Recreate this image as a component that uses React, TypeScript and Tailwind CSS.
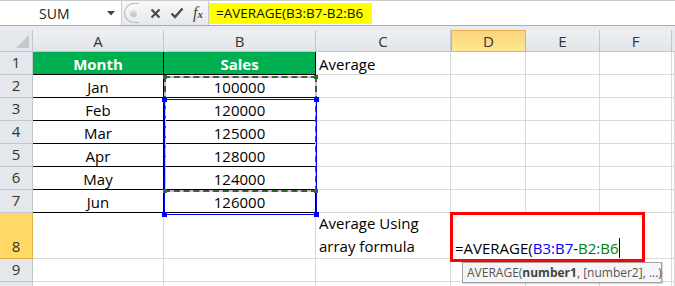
import React from "react";

const F = { fontFamily: '"Open Sans", "Noto Sans", sans-serif' };

type Cell = { text?: React.ReactNode; cls: string };

const GRID = "border-r border-b border-[#d9d9d9] bg-white";
const TBL = "border-r border-b border-black bg-white flex items-center justify-center pt-[2px]";
const GREEN = "border-r border-b border-black bg-[#00b050] flex items-center justify-center pt-[2px] text-white font-bold";
const RH = "border-r border-b border-[#c3c7cd] bg-[#e4e7eb] flex items-end justify-center pb-[1px] text-[#333]";
const RHSEL = "border-r border-b border-[#e4b04a] bg-[#ffd865] flex items-end justify-center pb-[1px] text-[#333]";

export default function App() {
  const colLetters = ["A", "B", "C", "D", "E", "F"];
  const data: [string, string][] = [
    ["Jan", "100000"],
    ["Feb", "120000"],
    ["Mar", "125000"],
    ["Apr", "128000"],
    ["May", "124000"],
    ["Jun", "126000"],
  ];

  const rows: Cell[][] = [];
  const hdr: Cell[] = [
    {
      cls: "border-r border-b border-[#c3c7cd] bg-[#e4e7eb] flex items-end justify-end p-[3px]",
      text: (
        <svg width="13" height="13" viewBox="0 0 13 13">
          <polygon points="13,0 13,13 0,13" fill="#c4c8cd" />
        </svg>
      ),
    },
  ];
  colLetters.forEach((l) => {
    hdr.push({
      text: l,
      cls:
        l === "D"
          ? "border border-[#e8b14a] bg-gradient-to-b from-[#f9d47a] to-[#ffe793] flex items-center justify-center pt-[1px] text-[#333]"
          : "border-r border-b border-[#c3c7cd] bg-gradient-to-b from-[#eef0f3] to-[#e2e5e9] flex items-center justify-center pt-[1px] text-[#333]",
    });
  });
  hdr.push({ cls: "border-b border-[#c3c7cd] bg-[#e4e7eb]" });
  rows.push(hdr);

  rows.push([
    { text: "1", cls: RH },
    { text: "Month", cls: GREEN },
    { text: "Sales", cls: GREEN },
    { text: "Average", cls: GRID + " flex items-center pt-[2px] pl-[3px] whitespace-nowrap" },
    { cls: GRID },
    { cls: GRID },
    { cls: GRID },
    { cls: GRID },
  ]);
  data.forEach(([m, s], i) => {
    rows.push([
      { text: String(i + 2), cls: RH },
      { text: m, cls: TBL },
      { text: s, cls: TBL },
      { cls: GRID },
      { cls: GRID },
      { cls: GRID },
      { cls: GRID },
      { cls: GRID },
    ]);
  });
  rows.push([
    { text: "8", cls: RHSEL },
    { cls: GRID },
    { cls: GRID },
    {
      text: (
        <div className="leading-[23px] pl-[3px] whitespace-nowrap">
          <div>Average Using</div>
          <div>array formula</div>
        </div>
      ),
      cls: GRID + " flex items-end",
    },
    { cls: GRID },
    { cls: GRID },
    { cls: GRID },
    { cls: GRID },
  ]);
  rows.push([
    { text: "9", cls: RH },
    { cls: GRID },
    { cls: GRID },
    { cls: GRID },
    { cls: GRID },
    { cls: GRID },
    { cls: GRID },
    { cls: GRID },
  ]);
  rows.push([
    { cls: RH },
    { cls: GRID },
    { cls: GRID },
    { cls: GRID },
    { cls: GRID },
    { cls: GRID },
    { cls: GRID },
    { cls: GRID },
  ]);

  return (
    <div className="w-[675px] h-[286px] overflow-hidden bg-white relative text-[15px] text-black" style={F}>
      {/* formula bar */}
      <div className="h-[26px] flex border-t border-[#c9cbce] border-b border-b-[#a9adb3] bg-[#f1f2f4]">
        <div className="w-[122px] h-full bg-white border-r border-[#c9cbce] flex items-center pl-[39px] pr-[6px]">
          <span className="text-[14px] text-[#222]">SUM</span>
          <svg className="ml-auto" width="8" height="5" viewBox="0 0 8 5">
            <polygon points="0,0 8,0 4,4.5" fill="#444" />
          </svg>
        </div>
        <div className="w-[86px] h-full flex items-center bg-gradient-to-b from-[#f7f8f9] to-[#e6e8eb] pl-[2px]">
          <div className="w-[15px] h-[20px] rounded-l-full border border-r-0 border-[#b5b9be] bg-gradient-to-b from-[#fbfbfc] to-[#e8eaed] flex items-center justify-end pr-[2px]">
            <div className="w-[7px] h-[7px] rounded-full bg-gradient-to-b from-[#e6e6e6] to-[#bdbdbd]" />
          </div>
          <svg className="ml-[11px]" width="11" height="11" viewBox="0 0 11 11">
            <path d="M1.5 1.5 L9.5 9.5 M9.5 1.5 L1.5 9.5" stroke="#4a4a4a" strokeWidth="2.2" />
          </svg>
          <svg className="ml-[9px]" width="14" height="12" viewBox="0 0 14 12">
            <path d="M1.5 6.5 L5 10 L12.5 1.5" stroke="#4a4a4a" strokeWidth="2.4" fill="none" />
          </svg>
          <span
            className="ml-[9px] italic text-[16px] leading-[20px] text-[#444]"
            style={{ fontFamily: '"Liberation Serif", serif' }}
          >
            f<span className="text-[11px] font-bold">x</span>
          </span>
        </div>
        <div className="flex-1 h-full bg-white border-l border-[#c9cbce] pt-[2px]">
          <div className="h-[21px] w-[163px] bg-[#ffff00] text-[13.5px] leading-[21px] pl-[7px] text-[#111] whitespace-nowrap">
            =AVERAGE(B3:B7-B2:B6
          </div>
        </div>
      </div>
      <div className="h-[4px] bg-[#e8ebef]" />

      {/* sheet */}
      <div className="grid grid-cols-[33px_131px_152px_135px_75px_74px_72px_3px] grid-rows-[22px_23px_23px_23px_23px_23px_23px_23px_46px_23px_23px]">
        {rows.map((r, ri) =>
          r.map((c, ci) => (
            <div key={ri + "-" + ci} className={c.cls}>
              {c.text}
            </div>
          ))
        )}
      </div>

      {/* marching ants B2:B6 */}
      <div className="absolute left-[164px] top-[76px] w-[153px] h-[116px] border-2 border-[#f0a8f0] pointer-events-none" />
      <div className="absolute left-[164px] top-[76px] w-[153px] h-[116px] border-2 border-dashed border-[#2a6b2a] pointer-events-none" />
      <div className="absolute left-[164px] top-[99px] w-[2px] h-[93px] border-l-2 border-dashed border-[#e8e800]" />
      {/* blue range B3:B7 */}
      <div className="absolute left-[164px] top-[99px] w-[153px] h-[116px] border border-[#0000ff] pointer-events-none" />
      {/* handles */}
      <div className="absolute left-[163px] top-[75px] w-[4px] h-[4px] bg-[#2a6b2a]" />
      <div className="absolute left-[314px] top-[75px] w-[4px] h-[4px] bg-[#2a6b2a]" />
      <div className="absolute left-[163px] top-[189px] w-[4px] h-[4px] bg-[#2a6b2a]" />
      <div className="absolute left-[314px] top-[189px] w-[4px] h-[4px] bg-[#2a6b2a]" />
      <div className="absolute left-[162px] top-[97px] w-[5px] h-[5px] bg-[#0000ff]" />
      <div className="absolute left-[314px] top-[97px] w-[5px] h-[5px] bg-[#0000ff]" />
      <div className="absolute left-[162px] top-[212px] w-[5px] h-[5px] bg-[#0000ff]" />
      <div className="absolute left-[314px] top-[212px] w-[5px] h-[5px] bg-[#0000ff]" />

      {/* edit box */}
      <div className="absolute left-[450px] top-[212px] w-[195px] h-[50px] border-[3px] border-[#ff0000] bg-white flex items-end pl-[2px]">
        <span className="whitespace-nowrap leading-[22px]">
          =AVERAGE(<span className="text-[#0000ff]">B3:B7</span>-<span className="text-[#008000]">B2:B6</span>
        </span>
        <span className="inline-block w-[1px] h-[20px] bg-black mb-[1px]" />
      </div>

      {/* tooltip */}
      <div className="absolute left-[462px] top-[262px] w-[200px] h-[21px] border border-[#a0a0a0] bg-[#f5f5f5] text-[12px] leading-[19px] pl-[4px] text-[#555] whitespace-nowrap shadow-[1px_1px_1px_rgba(0,0,0,0.15)]">
        AVERAGE(<span className="font-bold text-[#444]">number1</span>, [number2], ...)
      </div>
    </div>
  );
}
